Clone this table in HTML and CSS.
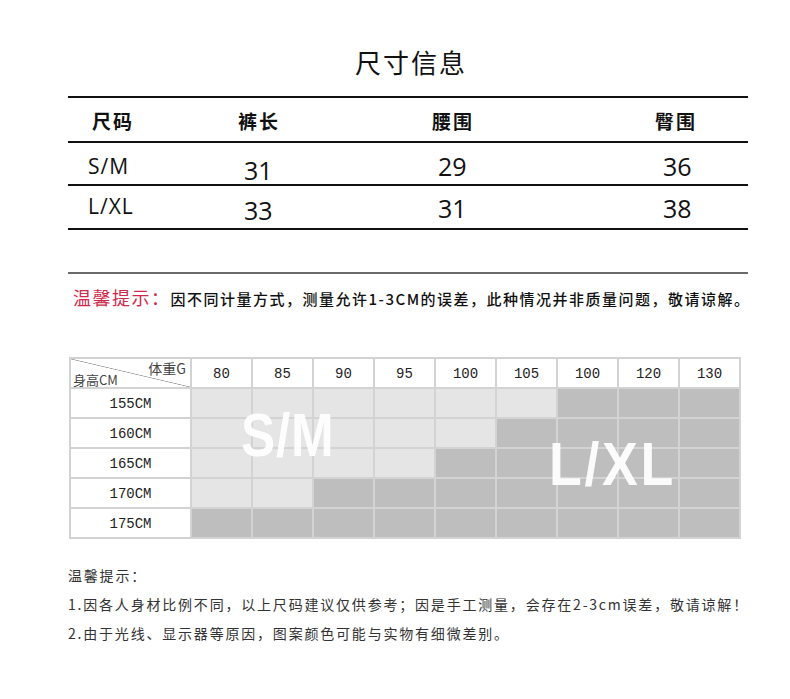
FILE: index.html
```html
<!DOCTYPE html>
<html lang="zh-CN">
<head>
<meta charset="utf-8">
<title>尺寸信息</title>
<link rel="stylesheet" href="styles.css">
</head>
<body>
<div class="page">
  <h1 class="title">尺寸信息</h1>

  <div class="size-table">
    <div class="row head">
      <div class="hcell">尺码</div>
      <div class="hcell">裤长</div>
      <div class="hcell">腰围</div>
      <div class="hcell">臀围</div>
    </div>
    <div class="row r1">
      <div class="size">S/M</div>
      <div class="num n-a">31</div>
      <div class="num n-b">29</div>
      <div class="num n-c">36</div>
    </div>
    <div class="row r2">
      <div class="size">L/XL</div>
      <div class="num n-a">33</div>
      <div class="num n-b">31</div>
      <div class="num n-c">38</div>
    </div>
  </div>

  <div class="rule"></div>

  <p class="tip"><span class="tip-label">温馨提示：</span>因不同计量方式，测量允许1-3CM的误差，此种情况并非质量问题，敬请谅解。</p>

  <div class="chart">
    <div class="corner"><span class="corner-w">体重G</span><span class="corner-h">身高CM</span></div>
    <div class="hd">80</div><div class="hd">85</div><div class="hd">90</div><div class="hd">95</div><div class="hd">100</div><div class="hd">105</div><div class="hd">100</div><div class="hd">120</div><div class="hd">130</div>

    <div class="rl">155CM</div>
    <div class="lt"></div><div class="lt"></div><div class="lt"></div><div class="lt"></div><div class="lt"></div><div class="lt"></div><div class="dk"></div><div class="dk"></div><div class="dk"></div>

    <div class="rl">160CM</div>
    <div class="lt"></div><div class="lt"></div><div class="lt"></div><div class="lt"></div><div class="lt"></div><div class="dk"></div><div class="dk"></div><div class="dk"></div><div class="dk"></div>

    <div class="rl">165CM</div>
    <div class="lt"></div><div class="lt"></div><div class="lt"></div><div class="lt"></div><div class="dk"></div><div class="dk"></div><div class="dk"></div><div class="dk"></div><div class="dk"></div>

    <div class="rl">170CM</div>
    <div class="lt"></div><div class="lt"></div><div class="dk"></div><div class="dk"></div><div class="dk"></div><div class="dk"></div><div class="dk"></div><div class="dk"></div><div class="dk"></div>

    <div class="rl">175CM</div>
    <div class="dk"></div><div class="dk"></div><div class="dk"></div><div class="dk"></div><div class="dk"></div><div class="dk"></div><div class="dk"></div><div class="dk"></div><div class="dk"></div>

    <div class="mark mark-sm">S/M</div>
    <div class="mark mark-lxl">L/XL</div>
  </div>

  <div class="notes">
    <p>温馨提示：</p>
    <p>1.因各人身材比例不同，以上尺码建议仅供参考；因是手工测量，会存在2-3cm误差，敬请谅解！</p>
    <p>2.由于光线、显示器等原因，图案颜色可能与实物有细微差别。</p>
  </div>
</div>
</body>
</html>
```

FILE: styles.css
```css
* { box-sizing: border-box; }

body {
  margin: 0;
  background: #ffffff;
  font-family: "Noto Sans CJK SC", "Noto Sans", sans-serif;
  color: #111;
}

.page {
  width: 680px;
  margin-left: 68px;
}

.title {
  margin: 44px 0 0;
  padding-left: 6px;
  height: 36px;
  font-size: 26px;
  line-height: 36px;
  font-weight: 400;
  letter-spacing: 2px;
  text-align: center;
  color: #111;
}

/* size table */
.size-table {
  margin-top: 16px;
  border-top: 2px solid #111;
}

.row {
  display: grid;
  grid-template-columns: 146px 194px 223px 1fr;
  border-bottom: 2px solid #111;
}

.row.head { height: 45px; align-items: center; }
.row.r1 { height: 43px; align-items: start; }
.row.r2 { height: 44px; align-items: start; }

.hcell {
  padding-left: 24px;
  padding-top: 1px;
  font-size: 19px;
  font-weight: 700;
  letter-spacing: 2px;
  color: #111;
}

.size {
  padding-left: 20px;
  font-family: "Open Sans", sans-serif;
  font-size: 21px;
  line-height: 21px;
  letter-spacing: 1px;
  color: #111;
}

.num {
  font-family: "Open Sans", sans-serif;
  font-size: 25px;
  line-height: 25px;
  color: #111;
}

.n-a { padding-left: 30px; }
.n-b { padding-left: 30px; }
.n-c { padding-left: 32px; }

.r1 .size { padding-top: 13px; }
.r1 .n-a { padding-top: 15px; }
.r1 .n-b { padding-top: 11px; }
.r1 .n-c { padding-top: 11px; }

.r2 .size { padding-top: 10px; }
.r2 .n-a { padding-top: 12px; }
.r2 .n-b { padding-top: 10px; }
.r2 .n-c { padding-top: 10px; }

.rule {
  margin-top: 42px;
  height: 2px;
  background: #6a6a6a;
}

.tip {
  margin: 11px 0 0 5px;
  height: 24px;
  line-height: 24px;
  white-space: nowrap;
  font-size: 15px;
  font-weight: 500;
  letter-spacing: 1.5px;
  color: #111;
}

.tip-label {
  font-size: 18px;
  font-weight: 400;
  letter-spacing: 1.5px;
  color: #d0284c;
}

/* weight / height chart */
.chart {
  position: relative;
  margin-top: 48px;
  margin-left: 1px;
  width: 672px;
  display: grid;
  grid-template-columns: 119px repeat(9, 59px);
  grid-auto-rows: 28px;
  gap: 2px;
  padding: 2px;
  background: #d3d3d3;
}

.corner {
  position: relative;
  background: linear-gradient(to top right, #fff calc(50% - 0.7px), #9a9a9a 50%, #fff calc(50% + 0.7px));
  font-size: 14px;
  color: #444;
}

.corner-w {
  position: absolute;
  right: 4px;
  top: 0;
  line-height: 18px;
}

.corner-h {
  position: absolute;
  left: 2px;
  bottom: -1px;
  line-height: 16px;
  font-size: 13px;
}

.hd, .rl {
  background: #fff;
  display: flex;
  align-items: center;
  justify-content: center;
  padding-top: 2px;
  font-family: "Liberation Mono", monospace;
  font-size: 14px;
  color: #222;
}

.lt { background: #e5e5e5; }
.dk { background: #bebebe; }

.mark {
  position: absolute;
  font-family: "Liberation Sans", sans-serif;
  font-weight: 700;
  font-size: 61px;
  line-height: 61px;
  color: rgba(255, 255, 255, 0.93);
  transform-origin: left top;
}

.mark-sm {
  left: 172px;
  top: 48px;
  letter-spacing: 1px;
  transform: scaleX(0.84);
}

.mark-lxl {
  left: 480px;
  top: 77px;
  letter-spacing: 3px;
  transform: scaleX(0.88);
}

.notes {
  margin-top: 22px;
  font-size: 14px;
  line-height: 29px;
  letter-spacing: 1.8px;
  color: #333;
  white-space: nowrap;
}

.notes p { margin: 0; }
```
